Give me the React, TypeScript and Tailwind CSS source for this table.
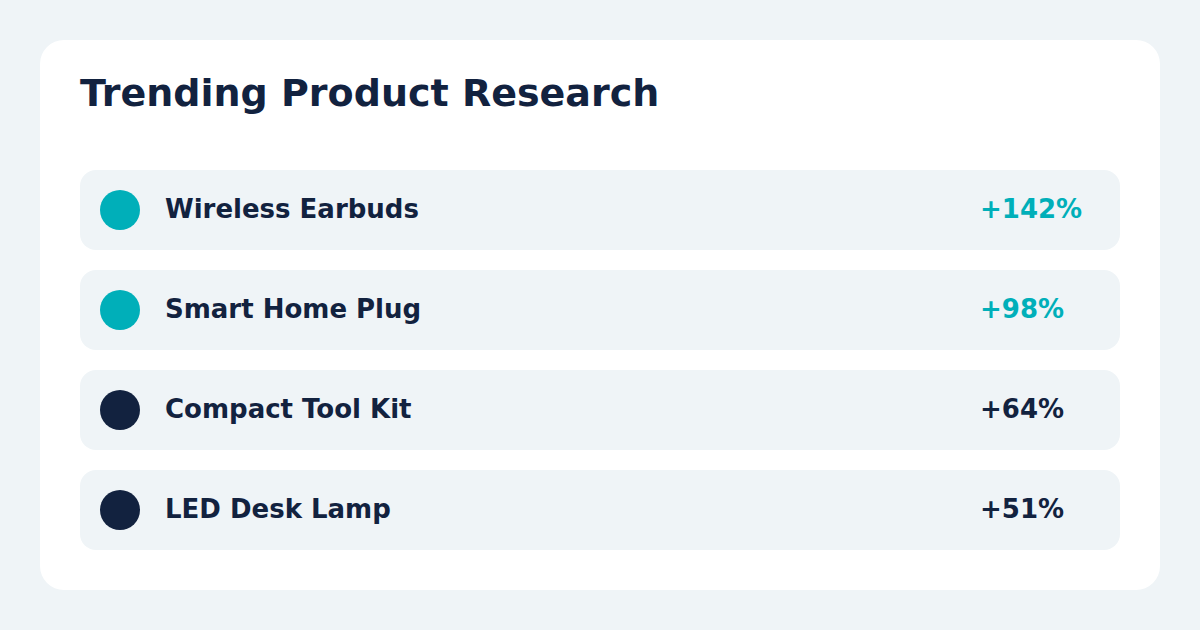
const rows = [
  { name: "Wireless Earbuds", pct: "+142%", teal: true },
  { name: "Smart Home Plug", pct: "+98%", teal: true },
  { name: "Compact Tool Kit", pct: "+64%", teal: false },
  { name: "LED Desk Lamp", pct: "+51%", teal: false },
];

export default function App() {
  return (
    <div
      className="w-[1200px] h-[630px] bg-[#eff4f7] p-10"
      style={{ fontFamily: '"DejaVu Sans", "Liberation Sans", sans-serif' }}
    >
      <div className="h-[550px] bg-white rounded-3xl pt-[31px] px-10 pb-10 flex flex-col">
        <h1 className="text-[38px] leading-[44px] font-bold text-[#12223f]">
          Trending Product Research
        </h1>
        <div className="mt-[55px] flex flex-col gap-5">
          {rows.map((r) => (
            <div
              key={r.name}
              className="h-20 bg-[#eff4f7] rounded-2xl pl-5 flex items-center"
            >
              <div
                className={
                  "w-10 h-10 rounded-full shrink-0 " +
                  (r.teal ? "bg-[#00afb9]" : "bg-[#12223f]")
                }
              />
              <span className="ml-[25px] pb-[1px] text-[26px] font-bold text-[#12223f]">
                {r.name}
              </span>
              <span
                className={
                  "ml-auto w-[140px] pb-[1px] text-[26px] font-bold " +
                  (r.teal ? "text-[#00afb9]" : "text-[#12223f]")
                }
              >
                {r.pct}
              </span>
            </div>
          ))}
        </div>
      </div>
    </div>
  );
}
